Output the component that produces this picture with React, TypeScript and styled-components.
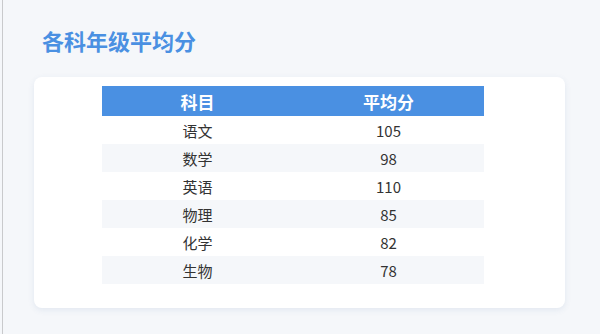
import React from "react";
import styled, { createGlobalStyle } from "styled-components";

const GlobalStyle = createGlobalStyle`
  html, body {
    margin: 0;
    padding: 0;
    background: #f5f7fa;
  }
  body {
    font-family: "Noto Sans CJK SC", "Noto Sans", sans-serif;
  }
`;

const Frame = styled.div`
  margin-left: 2px;
  border-left: 1px solid #c9cacc;
  min-height: 334px;
  box-sizing: border-box;
  padding: 24px 35px 0 31px;
  background: #f5f7fa;
`;

const Title = styled.h2`
  margin: 0 0 21px 8px;
  font-size: 22px;
  line-height: 32px;
  font-weight: 700;
  color: #4a90e2;
`;

const Card = styled.div`
  background: #ffffff;
  border-radius: 8px;
  box-shadow: 0 2px 6px rgba(60, 100, 160, 0.1);
  padding: 9px 81px 24px 68px;
`;

const Table = styled.table`
  width: 382px;
  border-collapse: collapse;
  table-layout: fixed;
`;

const HeadCell = styled.th`
  background: #4a90e2;
  color: #ffffff;
  font-size: 17px;
  font-weight: 700;
  height: 30px;
  padding: 0;
  text-align: center;
`;

const Row = styled.tr<{ $striped: boolean }>`
  background: ${(p) => (p.$striped ? "#f5f7fa" : "#ffffff")};
`;

const Cell = styled.td`
  height: 28px;
  padding: 0;
  text-align: center;
  font-size: 15px;
  color: #333333;
`;

const data = [
  { subject: "语文", score: 105 },
  { subject: "数学", score: 98 },
  { subject: "英语", score: 110 },
  { subject: "物理", score: 85 },
  { subject: "化学", score: 82 },
  { subject: "生物", score: 78 },
];

export default function App() {
  return (
    <>
      <GlobalStyle />
      <Frame>
        <Title>各科年级平均分</Title>
        <Card>
          <Table>
            <thead>
              <tr>
                <HeadCell>科目</HeadCell>
                <HeadCell>平均分</HeadCell>
              </tr>
            </thead>
            <tbody>
              {data.map((d, i) => (
                <Row key={d.subject} $striped={i % 2 === 1}>
                  <Cell>{d.subject}</Cell>
                  <Cell>{d.score}</Cell>
                </Row>
              ))}
            </tbody>
          </Table>
        </Card>
      </Frame>
    </>
  );
}
